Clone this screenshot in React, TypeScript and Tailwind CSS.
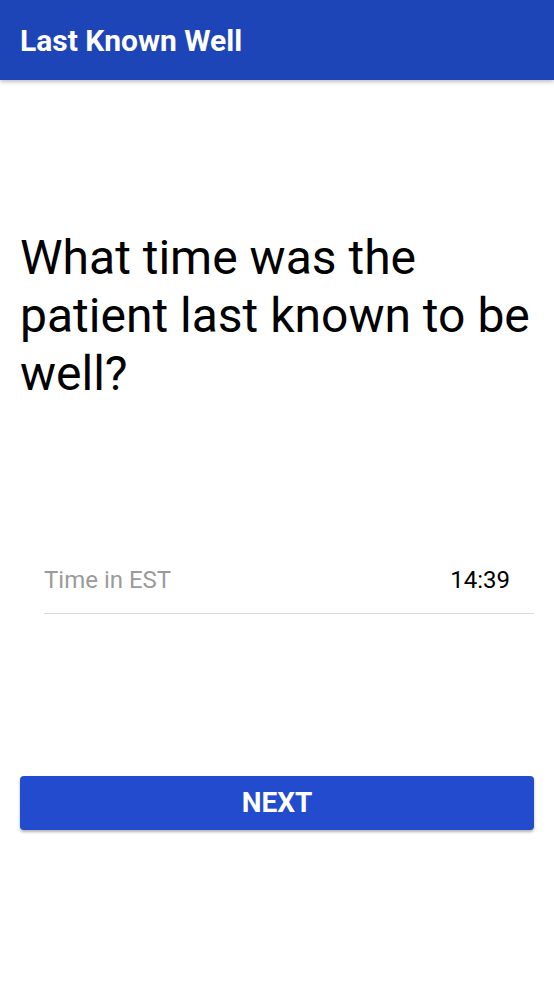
export default function App() {
  return (
    <div className="min-h-[988px] bg-white font-['Roboto',sans-serif]">
      <header className="h-20 bg-[#1e45b8] px-5 flex items-center shadow-[0_2px_4px_rgba(0,0,0,0.25)]">
        <h1 className="text-[30px] font-bold text-white">Last Known Well</h1>
      </header>

      <main className="px-5">
        <h2 className="mt-[149px] text-[48px] leading-[58px] text-black">
          What time was the patient last known to be well?
        </h2>

        <div className="mt-[159px] ml-6 flex items-center justify-between border-b border-[#dcdcdc] pb-[15px] pr-6">
          <span className="text-[24px] leading-9 text-[#9b9b9b]">Time in EST</span>
          <span className="text-[24px] leading-9 text-black">14:39</span>
        </div>

        <button className="mt-[162px] w-full h-[54px] rounded bg-[#224bce] text-white text-[28px] font-bold shadow-[0_2px_3px_rgba(0,0,0,0.3)]">
          NEXT
        </button>
      </main>
    </div>
  );
}
